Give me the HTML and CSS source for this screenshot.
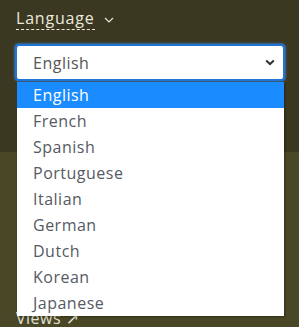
FILE: index.html
```html
<!DOCTYPE html>
<html>
<head>
<meta charset="utf-8">
<link rel="stylesheet" href="styles.css">
</head>
<body>
<div class="panel">
  <div class="top">
    <div class="lang-toggle">
      <span class="lang-label">Language</span>
      <svg class="caret" width="10" height="6" viewBox="0 0 10 6"><path d="M1 1l4 4 4-4" fill="none" stroke="#e6e3d6" stroke-width="1.2"/></svg>
    </div>
    <div class="select">
      <span class="select-value">English</span>
      <svg class="select-arrow" width="10" height="7" viewBox="0 0 10 7"><path d="M1.2 1.5l3.8 3.6 3.8-3.6" fill="none" stroke="#333" stroke-width="2"/></svg>
    </div>
  </div>
  <div class="bottom">
    <span class="views">Views ↗</span>
  </div>
  <ul class="options">
    <li class="opt active">English</li>
    <li class="opt">French</li>
    <li class="opt">Spanish</li>
    <li class="opt">Portuguese</li>
    <li class="opt">Italian</li>
    <li class="opt">German</li>
    <li class="opt">Dutch</li>
    <li class="opt">Korean</li>
    <li class="opt">Japanese</li>
  </ul>
</div>
</body>
</html>
```
FILE: styles.css
```css
html, body {
  margin: 0;
  padding: 0;
}
body {
  width: 299px;
  height: 327px;
  overflow: hidden;
  font-family: "Open Sans", "DejaVu Sans", sans-serif;
  background: #4a4726;
}
.panel {
  position: relative;
  height: 327px;
}
.top {
  background: #3b3822;
  height: 152px;
  padding: 7px 14px 0 15px;
  box-sizing: border-box;
}
.lang-toggle {
  display: flex;
  align-items: center;
  gap: 9px;
  height: 23px;
  margin-left: 1px;
}
.lang-label {
  color: #ece9dd;
  font-size: 16px;
  letter-spacing: 0.8px;
  line-height: 21px;
  border-bottom: 1px dashed #ece9dd;
}
.caret {
  margin-top: 2px;
}
.select {
  margin-top: 14px;
  height: 37px;
  box-sizing: border-box;
  border: 2px solid #1f74d6;
  border-radius: 4px;
  background: #fff;
  box-shadow: 0 0 2px 1px rgba(60,140,230,0.6);
  display: flex;
  align-items: center;
  justify-content: space-between;
  padding: 0 8px 0 16px;
}
.select-value {
  color: #555;
  font-size: 16px;
  letter-spacing: 0.5px;
}
.bottom {
  padding: 155px 0 0 16px;
}
.views {
  color: #e4e2d6;
  font-size: 16px;
  letter-spacing: 0.5px;
}
.options {
  position: absolute;
  left: 17px;
  top: 82px;
  width: 267px;
  margin: 0;
  padding: 0;
  list-style: none;
  background: #fff;
  box-shadow: 1px 1px 2px rgba(0,0,0,0.35);
}
.opt {
  height: 26px;
  line-height: 26px;
  padding-left: 16px;
  font-size: 16px;
  letter-spacing: 0.5px;
  color: #555a63;
}
.opt.active {
  background: #1a8cff;
  color: #fff;
}
```
